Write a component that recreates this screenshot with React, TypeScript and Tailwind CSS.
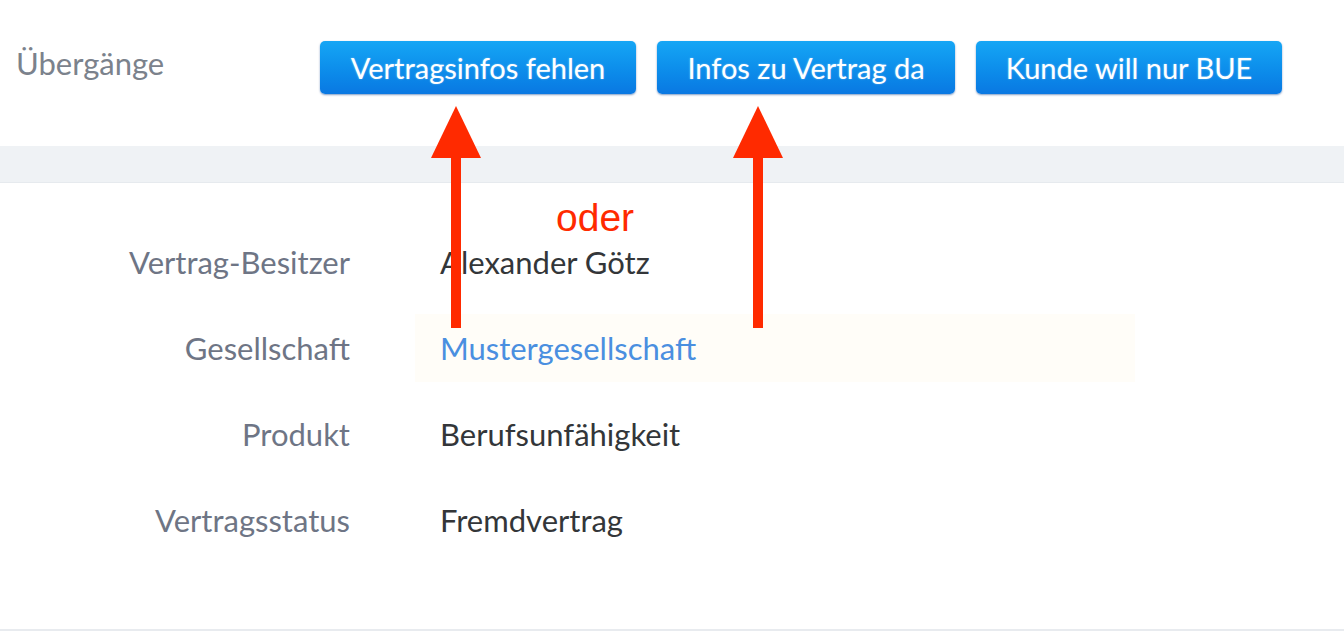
import React from 'react';

const rows = [
  { label: 'Vertrag-Besitzer', value: 'Alexander Götz' },
  { label: 'Gesellschaft', value: 'Mustergesellschaft', link: true },
  { label: 'Produkt', value: 'Berufsunfähigkeit' },
  { label: 'Vertragsstatus', value: 'Fremdvertrag' },
];

const buttons = [
  { text: 'Vertragsinfos fehlen', w: 'w-[316px]' },
  { text: 'Infos zu Vertrag da', w: 'w-[298px]' },
  { text: 'Kunde will nur BUE', w: 'w-[306px]' },
];

const Arrow = ({ left }: { left: string }) => (
  <svg className={`absolute top-[106px] ${left}`} width="52" height="222" viewBox="0 0 52 222">
    <polygon points="26,0 51,52 1,52" fill="#ff2a00" />
    <rect x="21" y="50" width="10" height="172" fill="#ff2a00" />
  </svg>
);

export default function App() {
  return (
    <div className="relative w-[1344px] h-[632px] overflow-hidden bg-white font-['Lato','Noto_Sans',sans-serif]">
      <div className="flex items-center h-[146px] pl-4">
        <div className="w-[304px] -mt-[20px] text-[31px] text-[#7b828c]">Übergänge</div>
        <div className="flex gap-[21px] -mt-[11px]">
          {buttons.map((b) => (
            <button
              key={b.text}
              className={`${b.w} h-[53px] rounded-[5px] bg-gradient-to-b from-[#16a6f5] to-[#0a78e2] text-white text-[29px] shadow-[0_1px_2px_rgba(0,60,140,0.5)] [text-shadow:0_0_2px_rgba(255,255,255,0.4)]`}
            >
              {b.text}
            </button>
          ))}
        </div>
      </div>

      <div className="h-[37px] bg-[#eff2f5] border-b border-[#e6eaee]" />

      <div className="pt-[36px] border-b-2 border-[#e8ebef] h-[448px]">
        {rows.map((r) => (
          <div key={r.label} className="flex items-center h-[86px]">
            <div className="w-[350px] text-right text-[31px] text-[#6e7585]">{r.label}</div>
            <div
              className={`ml-[65px] w-[720px] h-[68px] flex items-center pl-[25px] text-[31px] ${
                r.link ? 'bg-[#fffdf8] text-[#4a8fe0]' : 'text-[#333639]'
              }`}
            >
              {r.value}
            </div>
          </div>
        ))}
      </div>

      <Arrow left="left-[430px]" />
      <Arrow left="left-[732px]" />
      <div className="absolute left-[556px] top-[198px] text-[39px] leading-none text-[#ff2a00] font-['Liberation_Sans',sans-serif]">
        oder
      </div>
    </div>
  );
}
